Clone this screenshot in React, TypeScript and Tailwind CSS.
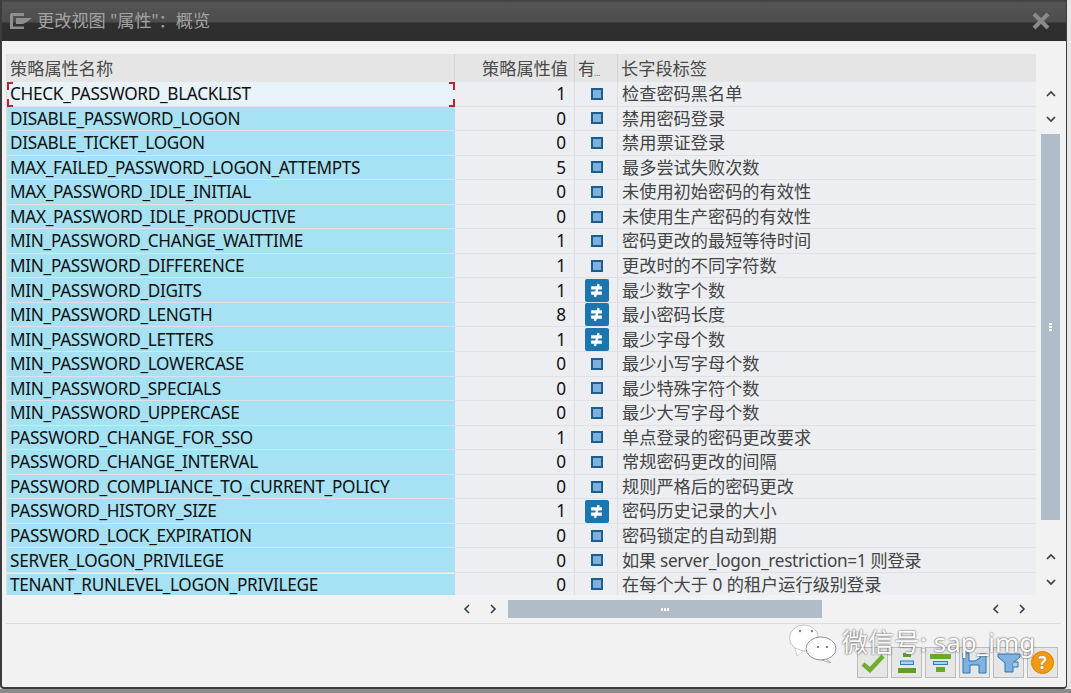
const rows: [string, string, boolean, string][] = [
  ["CHECK_PASSWORD_BLACKLIST", "1", false, "检查密码黑名单"],
  ["DISABLE_PASSWORD_LOGON", "0", false, "禁用密码登录"],
  ["DISABLE_TICKET_LOGON", "0", false, "禁用票证登录"],
  ["MAX_FAILED_PASSWORD_LOGON_ATTEMPTS", "5", false, "最多尝试失败次数"],
  ["MAX_PASSWORD_IDLE_INITIAL", "0", false, "未使用初始密码的有效性"],
  ["MAX_PASSWORD_IDLE_PRODUCTIVE", "0", false, "未使用生产密码的有效性"],
  ["MIN_PASSWORD_CHANGE_WAITTIME", "1", false, "密码更改的最短等待时间"],
  ["MIN_PASSWORD_DIFFERENCE", "1", false, "更改时的不同字符数"],
  ["MIN_PASSWORD_DIGITS", "1", true, "最少数字个数"],
  ["MIN_PASSWORD_LENGTH", "8", true, "最小密码长度"],
  ["MIN_PASSWORD_LETTERS", "1", true, "最少字母个数"],
  ["MIN_PASSWORD_LOWERCASE", "0", false, "最少小写字母个数"],
  ["MIN_PASSWORD_SPECIALS", "0", false, "最少特殊字符个数"],
  ["MIN_PASSWORD_UPPERCASE", "0", false, "最少大写字母个数"],
  ["PASSWORD_CHANGE_FOR_SSO", "1", false, "单点登录的密码更改要求"],
  ["PASSWORD_CHANGE_INTERVAL", "0", false, "常规密码更改的间隔"],
  ["PASSWORD_COMPLIANCE_TO_CURRENT_POLICY", "0", false, "规则严格后的密码更改"],
  ["PASSWORD_HISTORY_SIZE", "1", true, "密码历史记录的大小"],
  ["PASSWORD_LOCK_EXPIRATION", "0", false, "密码锁定的自动到期"],
  ["SERVER_LOGON_PRIVILEGE", "0", false, "如果 server_logon_restriction=1 则登录"],
  ["TENANT_RUNLEVEL_LOGON_PRIVILEGE", "0", false, "在每个大于 0 的租户运行级别登录"],
];

const cols = "grid grid-cols-[448px_120px_43px_418px]";

function Chevron({ d }: { d: string }) {
  return (
    <svg width="10" height="8" viewBox="0 0 10 8" fill="none" stroke="#33404a" strokeWidth="1.7">
      <path d={d} />
    </svg>
  );
}
const up = "M1 6 L5 2 L9 6";
const down = "M1 2 L5 6 L9 2";

function SideChevron({ left }: { left: boolean }) {
  return (
    <svg width="8" height="10" viewBox="0 0 8 10" fill="none" stroke="#33404a" strokeWidth="1.6">
      <path d={left ? "M6 1 L2 5 L6 9" : "M2 1 L6 5 L2 9"} />
    </svg>
  );
}

function Toolbtn({ children }: { children: React.ReactNode }) {
  return (
    <div className="w-[31px] h-[31px] bg-[#e6e6e6] border border-[#bcbcbc] flex items-center justify-center">
      {children}
    </div>
  );
}

export default function App() {
  return (
    <div className="w-[1071px] h-[693px] overflow-hidden bg-[#e6e6e6] relative font-['Noto_Sans','Noto_Sans_CJK_SC',sans-serif]">
      <div className="w-[1067px] h-[689px] flex flex-col rounded-b-sm bg-[#f2f2f2] border-l-2 border-r border-b-2 border-[#3c3c3c]">
        <div className="h-[41px] shrink-0 bg-[linear-gradient(#3f3f3f_0,#545454_3px,#4d4d4d_22px,#2f2f2f_23px,#2d2d2d_100%)] flex items-center pl-[8px] pr-[16px]">
          <svg width="22" height="16" viewBox="0 0 22 16" fill="none" className="mr-[5px]">
            <path d="M1 1.5 H14 M1.5 1 V15 H14" stroke="#8f8f8f" strokeWidth="3" />
            <path d="M6 5 H22 L17 9 L13 11 H6 Z" fill="#8f8f8f" />
          </svg>
          <span className="text-[17.2px] text-[#a2a2a2] grow">更改视图 "属性"：概览</span>
          <svg width="18" height="18" viewBox="0 0 18 18" stroke="#8a8a8a" strokeWidth="4">
            <path d="M2 2 L16 16 M16 2 L2 16" />
          </svg>
        </div>
        <div className="h-[13px] shrink-0" />
        <div className="ml-[4px] w-[1055px] border-b border-[#dcdcdc] h-[570px] shrink-0 flex flex-col relative">
          <div className="flex">
            <div className="w-[1030px] border-l border-[#e0e0e0] h-[541px]">
              <div className={`${cols} h-[28px] bg-[#e5e5e5] text-[17.2px] text-[#4a4a4a]`}>
                <div className="pl-[3px] pt-[1px] flex items-center border-r border-[#d4d4d4]">策略属性名称</div>
                <div className="pr-[6px] pt-[1px] flex items-center justify-end border-r border-[#d4d4d4]">策略属性值</div>
                <div className="pl-[3px] pt-[1px] flex items-center border-r border-[#d4d4d4] relative">
                  有<span className="text-[8px] absolute left-[19px] bottom-[3px]">...</span>
                </div>
                <div className="pl-[3px] pt-[1px] flex items-center">长字段标签</div>
              </div>
              {rows.map((r, i) => (
                <div key={r[0]} className={`${cols} ${i === 20 ? "h-[22px] pt-[1px]" : "h-[24.55px] border-b border-[#dfe1e5]"} text-[17.2px] leading-none bg-[#eceef2]`}>
                  <div className={`relative pl-[3px] flex items-center text-[#111] tracking-[-0.3px] ${i === 0 ? "bg-[#e7f2f9]" : "bg-[#a6e2f4]"}`}>
                    {r[0]}
                    {i === 0 && (
                      <>
                        <span className="absolute left-0 top-0 w-[6px] h-[8px] border-l-2 border-t-2 border-[#c0202f]" />
                        <span className="absolute left-0 bottom-[-1px] w-[6px] h-[8px] border-l-2 border-b-2 border-[#c0202f]" />
                        <span className="absolute right-0 top-0 w-[6px] h-[8px] border-r-2 border-t-2 border-[#c0202f]" />
                        <span className="absolute right-0 bottom-[-1px] w-[6px] h-[8px] border-r-2 border-b-2 border-[#c0202f]" />
                      </>
                    )}
                  </div>
                  <div className="pr-[8px] flex items-center justify-end text-[#111] border-r border-[#dcdde1]">{r[1]}</div>
                  <div className="flex items-center justify-center border-r border-[#dcdde1] pl-[1px]">
                    {r[2] ? (
                      <div className="w-[24px] h-[23px] rounded-[2px] bg-[#1b75ae] flex items-center justify-center">
                        <svg width="15" height="15" viewBox="0 0 14 14" stroke="#fff" fill="none">
                          <path d="M2 4.5 H12 M2 9.5 H12" strokeWidth="3" />
                          <path d="M9 1 L5.5 13" strokeWidth="2.2" />
                        </svg>
                      </div>
                    ) : (
                      <div className="w-[12px] h-[12px] bg-[#7fb0dc] border-2 border-[#1b5f8e]" />
                    )}
                  </div>
                  <div className={`pl-[4px] flex items-center text-[#444] whitespace-pre ${i === 19 ? "tracking-[-0.3px]" : ""}`}>{r[3]}</div>
                </div>
              ))}
            </div>
            <div className="w-[25px] flex flex-col items-center pl-[4px] pt-[28px]">
              <div className="h-[24px] flex items-center"><Chevron d={up} /></div>
              <div className="h-[25px] flex items-center"><Chevron d={down} /></div>
              <div className="w-[19px] h-[386px] mt-[3px] bg-[#b0bdc9] flex items-center justify-center flex-col gap-[1px]">
                <span className="w-[3px] h-[2px] bg-white" />
                <span className="w-[3px] h-[2px] bg-white" />
                <span className="w-[3px] h-[2px] bg-white" />
              </div>
              <div className="h-[25px] mt-[24px] flex items-center"><Chevron d={up} /></div>
              <div className="h-[25px] flex items-center"><Chevron d={down} /></div>
            </div>
          </div>
          <div className="mt-[5px] h-[18px] flex items-center">
            <div className="w-[448px]" />
            <div className="w-[26px] flex justify-center"><SideChevron left /></div>
            <div className="w-[26px] flex justify-center"><SideChevron left={false} /></div>
            <div className="w-[314px] h-[18px] ml-[2px] bg-[#b0bdc9] flex items-center justify-center gap-[1px]">
              <span className="w-[2px] h-[3px] bg-white" />
              <span className="w-[2px] h-[3px] bg-white" />
              <span className="w-[2px] h-[3px] bg-white" />
            </div>
            <div className="w-[161px]" />
            <div className="w-[26px] flex justify-center"><SideChevron left /></div>
            <div className="w-[26px] flex justify-center"><SideChevron left={false} /></div>
          </div>
        </div>
        <div className="flex justify-end gap-[3px] pr-[8px] pt-[23px]">
          <Toolbtn>
            <svg width="24" height="20" viewBox="0 0 24 20" fill="none" stroke="#6fae2e" strokeWidth="4.5">
              <path d="M2 11 L9 17 L22 3" />
            </svg>
          </Toolbtn>
          <Toolbtn>
            <svg width="20" height="20" viewBox="0 0 20 20">
              <rect x="6" y="0" width="8" height="4" fill="#5f9f25" />
              <rect x="3.5" y="8" width="13" height="3.5" fill="#a8d0f0" stroke="#2f80c0" />
              <rect x="1" y="15" width="18" height="5" fill="#5f9f25" />
            </svg>
          </Toolbtn>
          <Toolbtn>
            <svg width="21" height="18" viewBox="0 0 21 18">
              <rect x="0" y="0" width="21" height="5" fill="#6aa82a" />
              <rect x="3.5" y="7.5" width="14" height="3" fill="#a8d0f0" stroke="#2f80c0" />
              <rect x="6" y="13" width="9" height="5" fill="#6aa82a" />
            </svg>
          </Toolbtn>
          <Toolbtn>
            <svg width="25" height="22" viewBox="0 0 25 22" fill="#7fb2df" stroke="#2d75b0" strokeWidth="1">
              <path d="M1 1 H7 V9 H13 L18 6 V2 H24 V21 H17 V13 H8 V21 H1 Z" />
            </svg>
          </Toolbtn>
          <Toolbtn>
            <svg width="24" height="20" viewBox="0 0 24 20" fill="#7fb2df" stroke="#2d75b0" strokeWidth="1">
              <path d="M1 1 H23 V4 L16 10 V19 H8 V10 L1 4 Z" />
              <path d="M16 9 H21 V14 H16" fill="#a8d0f0" />
            </svg>
          </Toolbtn>
          <Toolbtn>
            <div className="w-[23px] h-[23px] rounded-full bg-[#f29a12] border border-[#d97f00] flex items-center justify-center text-[17px] font-bold text-white leading-none [text-shadow:0_0_1px_#8a4a00]">?</div>
          </Toolbtn>
        </div>
      </div>
      <div className="h-[4px] bg-[#8c8c8c]" />
      <div className="absolute left-[789px] top-[621px] flex items-center">
        <svg width="48" height="42" viewBox="0 0 48 42">
          <ellipse cx="15" cy="17" rx="14.5" ry="13" fill="#fff" stroke="#aaa" strokeWidth="0.7" />
          <path d="M6 27 L8 35 L14 30 Z" fill="#fff" stroke="#aaa" strokeWidth="0.5" />
          <ellipse cx="32" cy="27.5" rx="15" ry="11.5" fill="#fff" stroke="#777" strokeWidth="0.8" />
          <path d="M37 38 L42 42 L33 39 Z" fill="#fff" stroke="#777" strokeWidth="0.6" />
          <circle cx="11" cy="10" r="1.3" fill="#888" />
          <circle cx="23" cy="10" r="1.3" fill="#888" />
          <circle cx="29" cy="26" r="1.1" fill="#666" />
          <circle cx="38" cy="26" r="1.1" fill="#666" />
        </svg>
        <span className="ml-[5px] text-[26px] text-white [text-shadow:0_0_2px_#222] whitespace-nowrap">微信号: sap_img</span>
      </div>
    </div>
  );
}
